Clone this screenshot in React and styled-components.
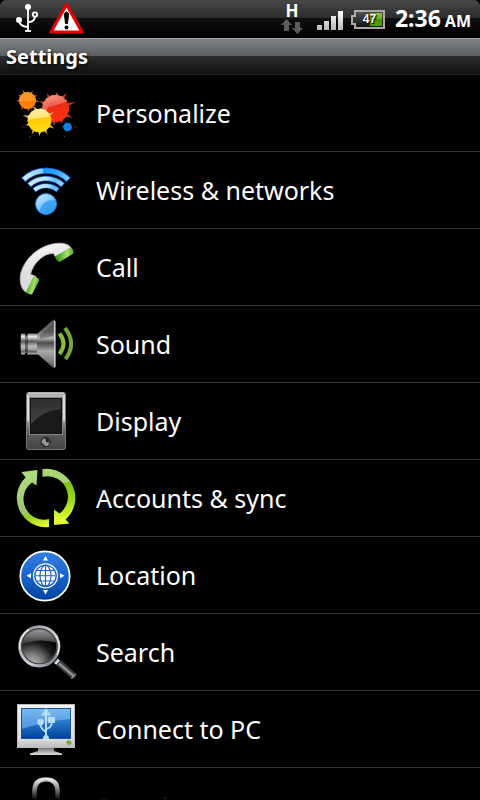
import React from 'react';
import styled, { createGlobalStyle } from 'styled-components';

const GlobalStyle = createGlobalStyle`
  body {
    margin: 0;
    background: #000;
  }
`;

const Screen = styled.div`
  display: flex;
  flex-direction: column;
  height: 100vh;
  overflow: hidden;
  background: #000;
  color: #fff;
  font-family: "Noto Sans", "Open Sans", sans-serif;
`;

const StatusBar = styled.header`
  display: flex;
  align-items: center;
  justify-content: space-between;
  height: 38px;
  flex: none;
  padding: 0 9px 0 14px;
  border-radius: 6px 6px 0 0;
  background: linear-gradient(#484848 0, #2c2c2c 18px, #111 18px, #000 34px);
`;

const StatusGroup = styled.div`
  display: flex;
  align-items: center;
  gap: ${(props) => props.$gap}px;
`;

const Network = styled.div`
  display: flex;
  flex-direction: column;
  align-items: center;
  width: 24px;
  padding-bottom: 2px;
  font-size: 17px;
  font-weight: 700;
  line-height: 16px;
`;

const Battery = styled.div`
  display: grid;
  place-items: center;

  > * {
    grid-area: 1 / 1;
  }
`;

const BatteryLevel = styled.span`
  padding-left: 3px;
  font-family: "Liberation Sans", sans-serif;
  font-size: 12px;
  font-weight: 700;
  line-height: 16px;
  text-shadow: 0 0 2px #000, 1px 1px 1px #000;
`;

const Clock = styled.time`
  display: flex;
  align-items: baseline;
  gap: 4px;
  font-size: 23px;
  font-weight: 700;
  line-height: 38px;
`;

const Meridiem = styled.span`
  font-size: 16px;
`;

const TitleBar = styled.div`
  box-sizing: border-box;
  flex: none;
  height: 37px;
  padding: 0 6px;
  border-top: 1px solid #a5a5a5;
  border-bottom: 1px solid #242628;
  background: linear-gradient(#808386 0, #5d6062 17px, #2b2d2f 17px, #0e1012 35px);
`;

const Title = styled.h1`
  margin: 0;
  font-size: 20px;
  font-weight: 700;
  line-height: 36px;
  text-shadow: 1px 1px 3px #000;
`;

const ListArea = styled.main`
  position: relative;
  flex: 1;
  min-height: 0;
  overflow: hidden;
`;

const List = styled.ul`
  margin: 0;
  padding: 0;
  list-style: none;
`;

const Row = styled.button`
  display: flex;
  align-items: center;
  gap: 14px;
  width: 100%;
  height: 77px;
  padding: 0 10px;
  border: 0;
  border-bottom: 1px solid #333;
  background: #000;
  color: #fff;
  font-family: inherit;
  font-size: 25px;
  line-height: 34px;
  text-align: left;
  cursor: pointer;
`;

const Icon = styled.svg`
  flex: none;
  width: 72px;
  height: 76px;
`;

const BottomFade = styled.div`
  position: absolute;
  right: 0;
  bottom: 0;
  left: 0;
  height: 20px;
  background: linear-gradient(transparent, #000);
  pointer-events: none;
`;

const RowIcon = ({ children }) => (
  <Icon viewBox="10 0 72 76" aria-hidden="true">{children}</Icon>
);

const Stops = ({ id, colors, x2 = 0, y2 = 1 }) => (
  <linearGradient id={id} x1="0" y1="0" x2={x2} y2={y2}>
    {colors.map(([offset, color]) => (
      <stop key={offset} offset={offset} stopColor={color} />
    ))}
  </linearGradient>
);

// wobbly disc with thin paint spikes, each spike is [angle, length]
const Splat = ({ cx, cy, r, fill, tip, spikes }) => {
  const at = (deg, d) => {
    const a = (deg * Math.PI) / 180;
    return `${(cx + Math.cos(a) * d).toFixed(1)} ${(cy + Math.sin(a) * d).toFixed(1)}`;
  };
  const edge = [];
  for (let a = 0; a < 360; a += 12) {
    edge.push(at(a, a % 24 ? r : r * 0.95));
  }
  return (
    <g>
      {spikes.map(([a, len]) => (
        <path key={a} d={`M${at(a - 7, r * 0.95)}L${at(a, r + len)}L${at(a + 7, r * 0.95)}Z`} fill={tip} />
      ))}
      <path d={`M${edge.join('L')}Z`} fill={fill} stroke={fill} strokeLinejoin="round" />
    </g>
  );
};

const PersonalizeIcon = () => (
  <RowIcon>
    <defs>
      <Stops id="orange" colors={[[0, '#ff9b2e'], [0.5, '#ff9324'], [0.6, '#ff7a00'], [1, '#ff8a10']]} />
      <Stops id="red" x2={0.3} colors={[[0, '#f3a08f'], [0.48, '#ee5f50'], [0.5, '#e92c17'], [1, '#ff3010']]} />
      <Stops id="yellow" x2={0.15} colors={[[0, '#fff0a0'], [0.44, '#ffe680'], [0.48, '#ffc900'], [1, '#ffdc10']]} />
    </defs>
    <Splat cx={27.5} cy={25.5} r={8.3} fill="url(#orange)" tip="#c96a10"
      spikes={[[5, 5], [50, 3], [85, 3], [125, 3], [178, 3], [212, 3], [245, 4], [298, 3], [330, 3]]} />
    <Splat cx={55.5} cy={33.5} r={13.5} fill="url(#red)" tip="#c4382a"
      spikes={[[342, 8], [305, 6], [275, 3], [240, 4], [205, 4], [30, 6], [65, 3], [95, 4], [125, 6]]} />
    <Splat cx={39.5} cy={45.5} r={11.8} fill="url(#yellow)" tip="#e5b75c"
      spikes={[[330, 5], [300, 3], [250, 3], [198, 6], [160, 3], [120, 4], [90, 4], [60, 4], [28, 5]]} />
    <Splat cx={67.5} cy={52} r={4} fill="#1680e0" tip="#0b5298"
      spikes={[[35, 2], [120, 2], [190, 2], [240, 2], [310, 2]]} />
    <path d="M29 63l2-2M22 52l1 0M64 61l1 1M75 52h1" stroke="#6b4514" strokeLinecap="round" />
  </RowIcon>
);

const WirelessIcon = () => (
  <RowIcon>
    <defs>
      <linearGradient id="wave" gradientUnits="userSpaceOnUse" x1="22" y1="0" x2="70" y2="0">
        <stop offset="0" stopColor="#d5f0ff" />
        <stop offset="0.43" stopColor="#8ccfff" />
        <stop offset="0.44" stopColor="#1496ff" />
        <stop offset="0.7" stopColor="#2ca3ff" />
        <stop offset="1" stopColor="#8ed0ff" />
      </linearGradient>
      <linearGradient id="waveSoft" gradientUnits="userSpaceOnUse" x1="28" y1="0" x2="64" y2="0">
        <stop offset="0" stopColor="#c8eaff" />
        <stop offset="0.5" stopColor="#c0e6ff" />
        <stop offset="0.75" stopColor="#63bbff" />
        <stop offset="1" stopColor="#b0e0ff" />
      </linearGradient>
      <Stops id="ball" x2={0.6} colors={[[0, '#d8f0ff'], [0.5, '#8ccbff'], [1, '#3aa0f6']]} />
    </defs>
    <g fill="none">
      <path d="M23.200 28A32.500 32.500 0 0 1 68.800 28" stroke="#0b62d6" strokeWidth="6.200" />
      <path d="M23.900 27.400A32.500 32.500 0 0 1 68.100 27.400" stroke="url(#wave)" strokeWidth="4.600" />
      <path d="M28.800 33.300A25 25 0 0 1 63.200 33.300" stroke="#0b62d6" strokeWidth="5.400" />
      <path d="M29.500 32.700A25 25 0 0 1 62.500 32.700" stroke="url(#waveSoft)" strokeWidth="4" />
      <path d="M34 38.500A17.700 17.700 0 0 1 58 38.500" stroke="#0b62d6" strokeWidth="5" />
      <path d="M34.600 38A17.700 17.700 0 0 1 57.400 38" stroke="url(#waveSoft)" strokeWidth="3.800" />
    </g>
    <circle cx="46" cy="52" r="10.500" fill="url(#ball)" stroke="#1478e4" />
    <path d="M40 59C40 53 46 46.500 55 48.500C57.500 56 51 62.500 43 61Z" fill="#2f9af4" opacity="0.75" />
  </RowIcon>
);

const CallIcon = () => (
  <RowIcon>
    <defs>
      <Stops id="handset" x2={0.3} colors={[[0, '#fff'], [0.5, '#e2e2e2'], [1, '#d8d8d8']]} />
      <Stops id="capTop" x2={1} y2={0} colors={[[0, '#3c8a10'], [0.25, '#57a828'], [0.65, '#a6e070'], [1, '#5aa52e']]} />
      <Stops id="capLow" x2={1} y2={0.4} colors={[[0, '#3a8a12'], [0.35, '#5dac30'], [0.65, '#a6e070'], [1, '#4c981e']]} />
    </defs>
    <path d="M26.500 63.500C20 60 18.500 49 22 40.500C28 25 44 14.500 59 14.200C65 14 69.500 16 71 19L55.500 28L53.500 24.500C44 24 33 34 30.500 45.500C32 45.500 34 46.500 36 47.500Z" fill="url(#handset)" stroke="#b5b5b5" strokeWidth="0.8" />
    <path d="M71 18Q73.500 20.500 73.500 24.500L59.500 33Q56 31.500 55 27.500Z" fill="url(#capTop)" />
    <path d="M33.500 47.500Q37 47.500 39.500 51L32 65.500Q28 65.500 26 63Z" fill="url(#capLow)" />
  </RowIcon>
);

const SoundIcon = () => (
  <RowIcon>
    <defs>
      <Stops id="metal" colors={[[0, '#777'], [0.15, '#ededed'], [0.38, '#5a5a5a'], [0.6, '#bcbcbc'], [0.75, '#a5a5a5'], [0.87, '#5c5c5c'], [1, '#c5c5c5']]} />
      <Stops id="cone" colors={[[0, '#555'], [0.25, '#6e6e6e'], [0.38, '#b5b5b5'], [0.48, '#4b4b4b'], [0.65, '#aaa'], [0.8, '#8a8a8a'], [1, '#555']]} />
    </defs>
    <path d="M21 27.500H25V48.500H21Q20 38 21 27.500ZM27.500 27.500H38V48.500H27.500Z" fill="url(#metal)" />
    <path d="M25 29H27.500V47H25Z" fill="url(#metal)" opacity="0.6" />
    <path d="M37 28L53.500 13.500Q55.500 13 55.500 16V60Q55.500 63 53.500 62L37 47.500Z" fill="url(#cone)" />
    <path d="M54.800 15V61" stroke="#ddd" strokeWidth="1.200" />
    <path d="M40 29L53 18V30L40 33Z" fill="#333" opacity="0.35" />
    <g fill="none" stroke="#83c234" strokeWidth="4">
      <path d="M59.500 27.500Q67.500 37.500 59.500 48" />
      <path d="M65 22Q77 37.500 65.500 53" stroke="#73a73a" />
    </g>
  </RowIcon>
);

const DisplayIcon = () => (
  <RowIcon>
    <defs>
      <Stops id="phone" colors={[[0, '#aaa'], [0.1, '#bbb'], [0.22, '#d2d2d2'], [0.42, '#c8c8c8'], [0.6, '#737373'], [0.76, '#575757'], [1, '#444']]} />
      <Stops id="glass" colors={[[0, '#2e2e2e'], [1, '#4c4c4c']]} />
    </defs>
    <rect x="26.500" y="9.500" width="39" height="57" rx="2" fill="url(#phone)" stroke="#777" />
    <path d="M28 10H64" stroke="#ddd" />
    <path d="M28 12V38M64 12V38" stroke="#e2e2e2" strokeWidth="1.500" />
    <rect x="29.500" y="14.500" width="33" height="37" fill="#111" stroke="#8a8a8a" />
    <rect x="31" y="16" width="30" height="34" fill="url(#glass)" />
    <path d="M31 41Q42 28 61 26V50H31Z" fill="#191919" />
    <circle cx="45.700" cy="59" r="4.600" fill="#444" stroke="#222" />
    <path d="M41.500 59Q42 56 45 55.500L46 59L49.500 60.500Q48 63.500 45.500 63Z" fill="#999" />
    <path d="M46 55.500L49 57L47 59Z" fill="#111" />
  </RowIcon>
);

const SyncIcon = () => (
  <RowIcon>
    <defs>
      <linearGradient id="syncR" gradientUnits="userSpaceOnUse" x1="50" y1="9" x2="56" y2="67">
        <stop offset="0" stopColor="#a5d76c" />
        <stop offset="0.24" stopColor="#aad572" />
        <stop offset="0.27" stopColor="#7cc414" />
        <stop offset="0.55" stopColor="#98d81c" />
        <stop offset="0.9" stopColor="#e8fa32" />
      </linearGradient>
      <linearGradient id="syncL" gradientUnits="userSpaceOnUse" x1="26" y1="10" x2="40" y2="67">
        <stop offset="0" stopColor="#b2dd80" />
        <stop offset="0.7" stopColor="#9cc470" />
        <stop offset="0.78" stopColor="#8fcf1e" />
        <stop offset="1" stopColor="#e6fa36" />
      </linearGradient>
    </defs>
    <path d="M42.500 9A29 29 0 0 1 65.500 59.500L69.500 63.500L54 65V49.500L59.500 53.500A20.500 20.500 0 0 0 42.500 17Z" fill="url(#syncR)" />
    <path d="M49 67A29 29 0 0 1 25.500 17.500L21.500 12L37.500 10L36.500 25.500L32 22.500A20.500 20.500 0 0 0 49 59Z" fill="url(#syncL)" />
  </RowIcon>
);

const LocationIcon = () => (
  <RowIcon>
    <defs>
      <Stops id="compass" colors={[[0, '#367fe0'], [0.5, '#1a63cb'], [1, '#00429c']]} />
    </defs>
    <circle cx="45" cy="39" r="24.700" fill="url(#compass)" stroke="#fff" strokeWidth="1.700" />
    <path d="M45.500 19L48 23.500H43ZM45.500 57.500L48 53H43ZM26.500 38.800L31 36.300V41.300ZM64.500 38.800L60 36.300V41.300Z" fill="#fff" />
    <circle cx="45.500" cy="38.800" r="12" fill="none" stroke="#fff" strokeWidth="1.200" />
    <circle cx="45.500" cy="38.800" r="10" fill="#fff" />
    <g fill="none" stroke="#1760c6" strokeWidth="1.100">
      <path d="M45.500 28.500V49M35.500 38.800H55.500M37 33.500H54M37 44H54" />
      <ellipse cx="45.500" cy="38.800" rx="5.500" ry="10.500" />
    </g>
  </RowIcon>
);

const SearchIcon = () => (
  <RowIcon>
    <defs>
      <radialGradient id="lens" cx="0.3" cy="1" r="0.8">
        <stop offset="0" stopColor="#c4c4c4" />
        <stop offset="0.35" stopColor="#858585" />
        <stop offset="0.75" stopColor="#1a1a1a" />
        <stop offset="1" stopColor="#050505" />
      </radialGradient>
      <Stops id="shine" colors={[[0, '#a2a2a2'], [0.5, '#707070'], [1, '#2a2a2a']]} />
      <Stops id="rim" x2={1} colors={[[0, '#70747e'], [0.25, '#a9abb6'], [0.6, '#d5d7df'], [1, '#596070']]} />
    </defs>
    <path d="M54 49L58 44.500L60 47L56.500 51Z" fill="#d5d8e2" />
    <path d="M56 51L61 46L76.500 60Q76 64 72.500 65.500Z" fill="#3a3a3a" />
    <path d="M58 50.500L60 48.500L75 61.500L73.500 63.500Z" fill="#8e8e8e" />
    <path d="M71 64.500L76 60" stroke="#aaa" />
    <circle cx="39.300" cy="32.300" r="19.700" fill="url(#lens)" />
    <path d="M21 29A18.500 18.500 0 0 1 57.600 29Q39 23 21 31Z" fill="url(#shine)" />
    <circle cx="39.300" cy="32.300" r="17.600" fill="none" stroke="#444" strokeWidth="1.400" />
    <circle cx="39.300" cy="32.300" r="19.700" fill="none" stroke="url(#rim)" strokeWidth="2.800" />
    <path d="M19.700 35A19.700 19.700 0 0 1 29 15.500M57 41A19.700 19.700 0 0 0 58.500 27" fill="none" stroke="#eef0f5" strokeWidth="1.300" />
  </RowIcon>
);

const ConnectIcon = () => (
  <RowIcon>
    <defs>
      <Stops id="bezel" colors={[[0, '#f2f2f2'], [0.8, '#ddd'], [1, '#bdbdbd']]} />
      <Stops id="desktop" colors={[[0, '#5aa6e8'], [0.4, '#2c7dd0'], [1, '#00429b']]} />
      <Stops id="stand" colors={[[0, '#777'], [0.5, '#aaa'], [1, '#ddd']]} />
    </defs>
    <path d="M38 57H54V60L62 62.500V64H30V62.500L38 60Z" fill="url(#stand)" />
    <rect x="17.500" y="13.500" width="57" height="43" fill="url(#bezel)" stroke="#bbb" />
    <rect x="21.500" y="17.500" width="49" height="30" fill="url(#desktop)" stroke="#1c5391" />
    <path d="M22 18H70V28Q45 30 22 38Z" fill="#9bd2ff" opacity="0.45" />
    <g fill="none" stroke="#b9dcf6" strokeWidth="2">
      <path d="M46 23V47M40.500 31V34Q41 38 46 41M51.500 29V33Q51 37 46 38" />
    </g>
    <path d="M46 17L51 24.500H41ZM48 26H55V32H48ZM43 48Q43 44 46 44Q49 44 49 48Z" fill="#b9dcf6" />
    <circle cx="40.500" cy="31" r="3.300" fill="#b9dcf6" />
    <circle cx="69" cy="51.800" r="2.200" fill="#62b818" stroke="#8ca37a" />
  </RowIcon>
);

const LockIcon = () => (
  <RowIcon>
    <defs>
      <Stops id="shackle" colors={[[0, '#eee'], [0.5, '#999'], [1, '#eee']]} x2={1} y2={0} />
    </defs>
    <path d="M34.500 36V23Q34.500 11.500 46 11.500Q57.500 11.500 57.500 23V36" fill="none" stroke="url(#shackle)" strokeWidth="4.500" />
    <path d="M35.500 19Q38 11 46 11Q54 11 56.500 19" fill="none" stroke="#e8e8e8" strokeWidth="2.500" />
    <rect x="26" y="35" width="40" height="30" rx="3" fill="#aaa" />
  </RowIcon>
);

const UsbIcon = () => (
  <svg width="26" height="30" viewBox="0 0 26 30" aria-hidden="true">
    <g fill="none" stroke="#fff" strokeWidth="1.800">
      <path d="M14 4V27M5 17Q6 22 13 23M21 13Q20 18 15 18" />
      <circle cx="21" cy="10.500" r="2.200" />
      <path d="M11 27H17" />
    </g>
    <circle cx="14" cy="3" r="3" fill="#fff" />
    <circle cx="5" cy="16" r="3" fill="#fff" />
  </svg>
);

const WarningIcon = () => (
  <svg width="36" height="35" viewBox="0 0 36 35" aria-hidden="true">
    <path d="M18.500 2.500L34 30H3Z" fill="#fff" stroke="#e90000" strokeWidth="3.200" strokeLinejoin="round" />
    <path d="M16.300 11.500Q18.500 8.500 20.700 11.500L19.500 21.500H17.500Z" fill="#000" stroke="#000" />
    <circle cx="18.500" cy="25.500" r="2" />
  </svg>
);

const ArrowsIcon = () => (
  <svg width="22" height="15" viewBox="0 0 22 15" aria-hidden="true">
    <path d="M5.500 0L11 6H8V12H3V6H0ZM16.500 15L11 9H14V3H19V9H22Z" fill="#5c5c5c" />
  </svg>
);

const SignalIcon = () => (
  <svg width="26" height="21" viewBox="0 0 26 21" aria-hidden="true">
    <defs>
      <Stops id="bars" colors={[[0, '#fff'], [1, '#b8b8b8']]} />
    </defs>
    <path d="M0 16H5V21H0ZM7 12H12V21H7ZM14 7H19V21H14ZM21 2H26V21H21Z" fill="url(#bars)" />
  </svg>
);

const BatteryIcon = () => (
  <svg width="34" height="19" viewBox="0 0 34 19" aria-hidden="true">
    <defs>
      <Stops id="charge" colors={[[0, '#8aca3c'], [0.45, '#68b016'], [0.5, '#4c9600'], [1, '#50a000']]} />
      <Stops id="empty" colors={[[0, '#555'], [1, '#111']]} />
    </defs>
    <path d="M4 1H33V18H4V14H1V6H4Z" fill="url(#empty)" stroke="#aaa" strokeWidth="2" />
    <path d="M19 3H31V16H19Z" fill="url(#charge)" />
  </svg>
);

const items = [
  { label: 'Personalize', icon: PersonalizeIcon },
  { label: 'Wireless & networks', icon: WirelessIcon },
  { label: 'Call', icon: CallIcon },
  { label: 'Sound', icon: SoundIcon },
  { label: 'Display', icon: DisplayIcon },
  { label: 'Accounts & sync', icon: SyncIcon },
  { label: 'Location', icon: LocationIcon },
  { label: 'Search', icon: SearchIcon },
  { label: 'Connect to PC', icon: ConnectIcon },
  { label: 'Security', icon: LockIcon },
];

const App = () => {
  return (
    <>
      <GlobalStyle />
      <Screen>
        <StatusBar>
          <StatusGroup $gap={8}>
            <UsbIcon />
            <WarningIcon />
          </StatusGroup>
          <StatusGroup $gap={10}>
            <StatusGroup $gap={8}>
              <StatusGroup $gap={13}>
                <Network>
                  <span>H</span>
                  <ArrowsIcon />
                </Network>
                <SignalIcon />
              </StatusGroup>
              <Battery>
                <BatteryIcon />
                <BatteryLevel>47</BatteryLevel>
              </Battery>
            </StatusGroup>
            <Clock>
              2:36 <Meridiem>AM</Meridiem>
            </Clock>
          </StatusGroup>
        </StatusBar>
        <TitleBar>
          <Title>Settings</Title>
        </TitleBar>
        <ListArea>
          <List>
            {items.map(({ label, icon: ItemIcon }) => (
              <li key={label}>
                <Row type="button">
                  <ItemIcon />
                  {label}
                </Row>
              </li>
            ))}
          </List>
          <BottomFade />
        </ListArea>
      </Screen>
    </>
  );
};

export default App;
